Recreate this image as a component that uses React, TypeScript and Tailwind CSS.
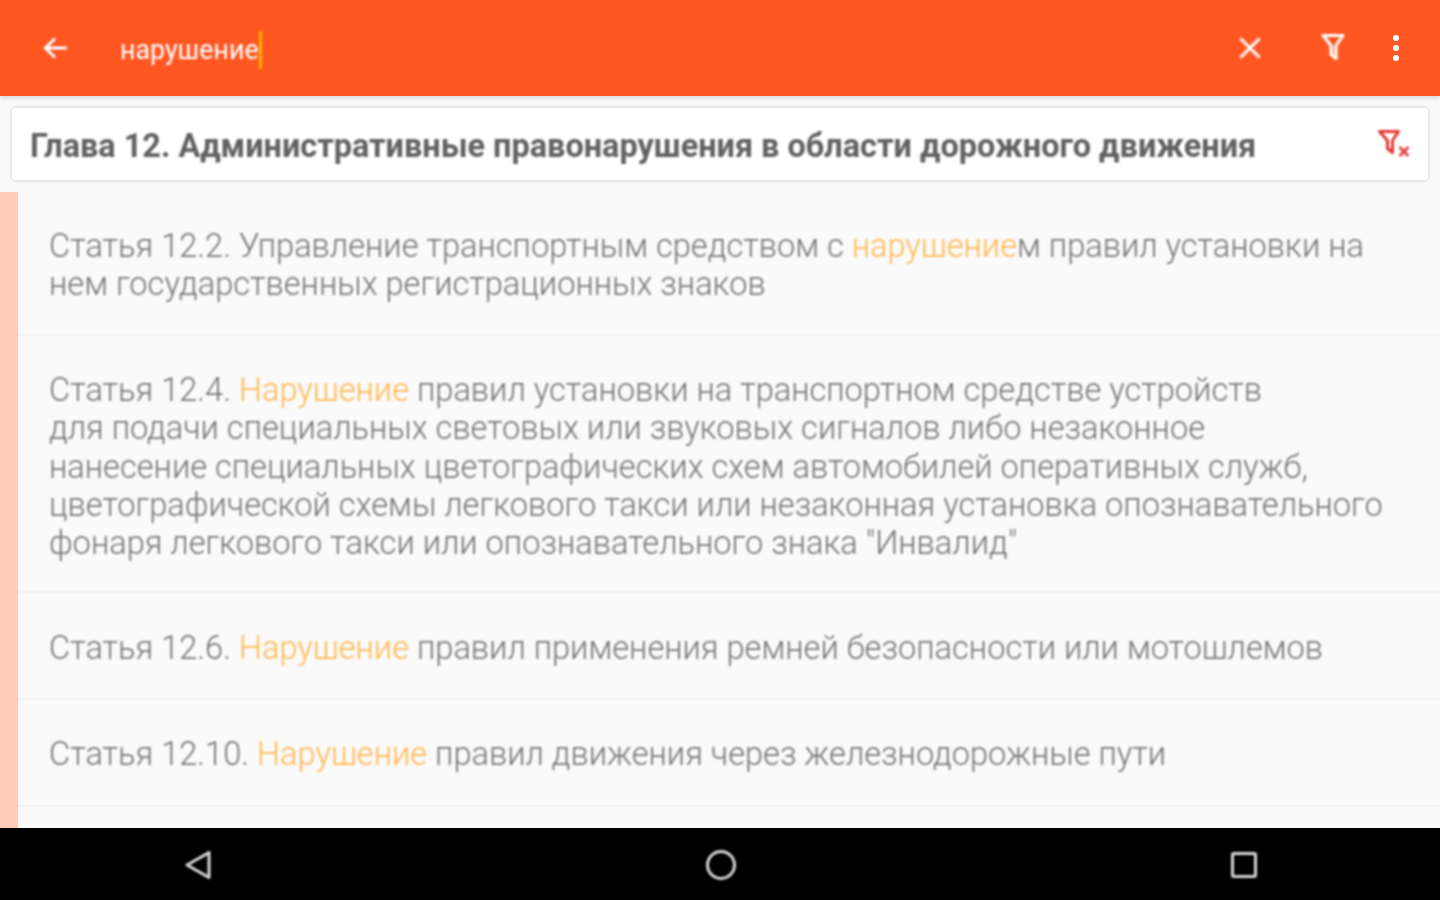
import React from 'react';

const ORANGE = 'text-[#ffb74d]';

function Hit({ children }: { children: React.ReactNode }) {
  return <span className={ORANGE}>{children}</span>;
}

function Row({ children, className }: { children: React.ReactNode; className: string }) {
  return (
    <div className="flex">
      <div className="w-[18px] shrink-0 bg-[#ffccbc]" />
      <div className={`flex-1 pl-[31px] pr-[20px] border-b-2 border-[#f4f4f4] text-[32.6px] leading-[38.25px] font-light text-[#757575] whitespace-nowrap ${className}`}>
        <div className="blur-[0.9px]">{children}</div>
      </div>
    </div>
  );
}

export default function App() {
  return (
    <div className="w-[1440px] h-[900px] overflow-hidden flex flex-col bg-[#fafafa] font-['Roboto',sans-serif]">
      {/* Search bar */}
      <header className="h-[96px] shrink-0 bg-[#ff5722] flex items-center shadow-[0_2px_5px_rgba(0,0,0,0.15)] z-10">
        <svg className="ml-[42px] w-[28px] h-[28px] blur-[0.9px]" viewBox="0 0 28 28" fill="none" stroke="#fff" strokeWidth="3">
          <path d="M25 14H4M13 4.500L3.500 14l9.500 9.500" />
        </svg>
        <div className="ml-[50px] mt-[3px] flex items-center h-[38px] text-[26.8px] text-white blur-[0.9px]">
          <span className="mt-[1px]">нарушение</span>
          <span className="w-[3px] h-[38px] bg-[#ffb300]" />
        </div>
        <div className="flex-1" />
        <svg className="w-[24px] h-[24px] mr-[58px] blur-[0.8px]" viewBox="0 0 24 24" fill="none" stroke="#fff" strokeWidth="3">
          <path d="M2.500 2.500l19 19M21.500 2.500l-19 19" />
        </svg>
        <svg className="w-[26px] h-[30px] mr-[47px] -mt-[3px] blur-[0.8px]" viewBox="0 0 26 30" fill="none" stroke="#fff" strokeWidth="3">
          <path d="M3 3.500h20l-7 10v13l-5-4v-9z" strokeLinejoin="round" />
          <path d="M13.500 14v8" strokeWidth="2" strokeOpacity="0.5" />
        </svg>
        <div className="flex flex-col gap-[4px] mr-[41px] blur-[0.6px]">
          <span className="w-[6px] h-[6px] rounded-full bg-white" />
          <span className="w-[6px] h-[6px] rounded-full bg-white" />
          <span className="w-[6px] h-[6px] rounded-full bg-white" />
        </div>
      </header>

      {/* Chapter heading */}
      <div className="mx-[12px] mt-[12px] h-[72px] shrink-0 bg-white rounded-[4px] shadow-[0_0_4px_rgba(0,0,0,0.22)] flex items-center pl-[18px] pr-[17px]">
        <span className="flex-1 pt-[5px] text-[32.45px] font-bold text-[#616161] whitespace-nowrap blur-[0.9px]">
          Глава 12. Административные правонарушения в области дорожного движения
        </span>
        <svg className="w-[34px] h-[32px] blur-[0.8px]" viewBox="0 0 34 32" fill="none" stroke="#e53935" strokeWidth="3">
          <path d="M2.500 3.500h19l-6 9v12l-5-4v-8z" strokeLinejoin="round" />
          <path d="M22.500 19l9 9M31.500 19l-9 9" strokeWidth="2.500" />
        </svg>
      </div>

      {/* Results */}
      <main className="mt-[12px] flex-1 overflow-hidden">
        <Row className="h-[144px] pt-[35px]">
          Статья 12.2. Управление транспортным средством с <Hit>нарушение</Hit>м правил установки на
          <br />
          нем государственных регистрационных знаков
        </Row>
        <Row className="h-[257px] pt-[35px]">
          Статья 12.4. <Hit>Нарушение</Hit> правил установки на транспортном средстве устройств
          <br />
          для подачи специальных световых или звуковых сигналов либо незаконное
          <br />
          нанесение специальных цветографических схем автомобилей оперативных служб,
          <br />
          цветографической схемы легкового такси или незаконная установка опознавательного
          <br />
          фонаря легкового такси или опознавательного знака "Инвалид"
        </Row>
        <Row className="h-[107px] pt-[36px]">
          Статья 12.6. <Hit>Нарушение</Hit> правил применения ремней безопасности или мотошлемов
        </Row>
        <Row className="h-[107px] pt-[35px]">
          Статья 12.10. <Hit>Нарушение</Hit> правил движения через железнодорожные пути
        </Row>
        <Row className="h-[60px]">{''}</Row>
      </main>

      {/* Android nav bar */}
      <nav className="h-[72px] shrink-0 bg-black flex items-center pt-[2px] z-10">
        <svg className="ml-[184px] w-[28px] h-[30px] blur-[0.8px]" viewBox="0 0 28 30" fill="none" stroke="#d8d8d8" strokeWidth="3">
          <path d="M25 2.500v25L3 15z" strokeLinejoin="round" />
        </svg>
        <div className="ml-[494px] w-[30px] h-[30px] rounded-full border-[3px] border-[#d8d8d8] blur-[0.8px]" />
        <div className="ml-[495px] w-[26px] h-[26px] rounded-[3px] border-[3px] border-[#d8d8d8] blur-[0.8px]" />
      </nav>
    </div>
  );
}
